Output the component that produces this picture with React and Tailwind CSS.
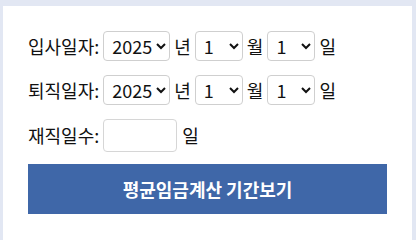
import React from "react";

const font = { fontFamily: '"Noto Sans CJK KR", "Noto Sans", sans-serif' };

function DateSelect({ value, width, options }) {
  return (
    <select
      defaultValue={value}
      className={`h-[30px] ${width} rounded-[4px] border border-[#cfcfcf] bg-white pl-[4px] text-[18px] text-[#111]`}
    >
      {options.map((o) => (
        <option key={o} value={o}>
          {o}
        </option>
      ))}
    </select>
  );
}

function DateRow({ label }) {
  const years = ["2023", "2024", "2025", "2026"];
  const months = Array.from({ length: 12 }, (_, i) => String(i + 1));
  const days = Array.from({ length: 31 }, (_, i) => String(i + 1));
  return (
    <div className="flex h-[30px] items-center gap-1 text-[18px] text-[#111]">
      <span>{label}</span>
      <DateSelect value="2025" width="w-[67px]" options={years} />
      <span>년</span>
      <DateSelect value="1" width="w-[48px]" options={months} />
      <span>월</span>
      <DateSelect value="1" width="w-[48px]" options={days} />
      <span>일</span>
    </div>
  );
}

export default function App() {
  return (
    <div className="flex h-screen flex-col overflow-hidden bg-[#e2e7f3] pl-[3px] pr-[4px] pt-[6px]" style={font}>
      <div className="flex-1 bg-white p-[25px]">
        <DateRow label="입사일자:" />
        <div className="mt-[14px]">
          <DateRow label="퇴직일자:" />
        </div>
        <div className="mt-[14px] flex h-[33px] items-center gap-1 text-[18px] text-[#111]">
          <span>재직일수:</span>
          <input
            type="text"
            className="h-[33px] w-[74px] rounded-[4px] border border-[#d6d6d6] bg-white px-1"
          />
          <span className="ml-[1px]">일</span>
        </div>
        <button className="mt-[12px] flex h-[50px] w-full items-center justify-center bg-[#3f67a8] text-[18px] font-bold text-white">
          평균임금계산 기간보기
        </button>
      </div>
    </div>
  );
}
